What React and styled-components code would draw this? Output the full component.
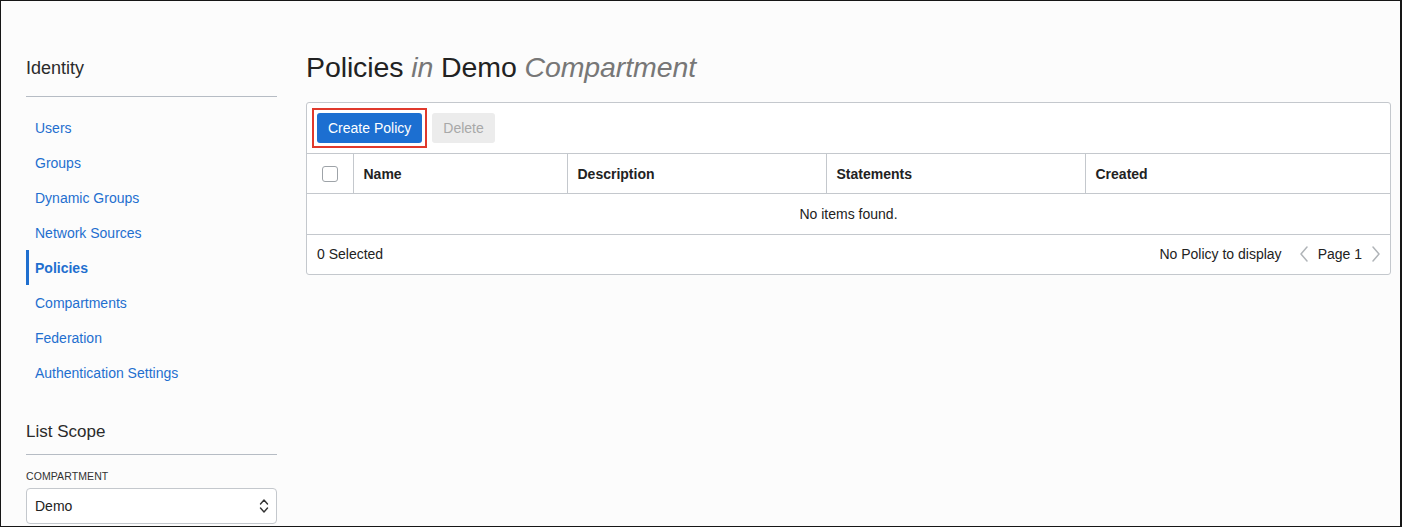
import React from "react";
import styled, { createGlobalStyle } from "styled-components";

const Global = createGlobalStyle`
  html, body { margin: 0; padding: 0; }
  body { font-family: "Liberation Sans", Arial, Helvetica, sans-serif; color: #222; }
  * { box-sizing: border-box; }
`;

const Frame = styled.div`
  width: 1402px;
  height: 527px;
  border: 1px solid #161616;
  border-right-width: 2px;
  background: #fcfcfc;
  display: flex;
  align-items: flex-start;
  padding: 0 10px 0 25px;
  gap: 29px;
  overflow: hidden;
`;

const Sidebar = styled.aside`
  width: 251px;
  flex: none;
  display: flex;
  flex-direction: column;
  padding-top: 55px;
`;

const SideTitle = styled.h2`
  margin: 0;
  font-size: ${(p) => p.$size || 18}px;
  line-height: 24px;
  font-weight: 300;
  color: #2b2b2b;
  padding-bottom: ${(p) => p.$pb || 16}px;
  border-bottom: 1px solid #b6bcc4;
`;

const NavList = styled.nav`
  display: flex;
  flex-direction: column;
  margin-top: 13px;
`;

const NavItem = styled.a`
  height: 35px;
  display: flex;
  align-items: center;
  padding-left: 6px;
  font-size: 14px;
  color: #1f6fcf;
  text-decoration: none;
  font-weight: ${(p) => (p.$active ? 700 : 400)};
  border-left: 3px solid ${(p) => (p.$active ? "#1f6fcf" : "transparent")};
`;

const ScopeSection = styled.div`
  margin-top: 30px;
  display: flex;
  flex-direction: column;
`;

const FieldLabel = styled.label`
  margin-top: 14px;
  font-size: 10.5px;
  line-height: 14px;
  font-weight: 500;
  letter-spacing: 0.1px;
  color: #333;
  text-transform: uppercase;
`;

const SelectBox = styled.div`
  margin-top: 5px;
  height: 36px;
  border: 1px solid #c4c8cd;
  border-radius: 4px;
  background: #fff;
  display: flex;
  align-items: center;
  justify-content: space-between;
  padding: 0 6px 0 8px;
  font-size: 14px;
  color: #222;
`;

const Main = styled.main`
  flex: 1;
  display: flex;
  flex-direction: column;
  padding-top: 50px;
`;

const Title = styled.h1`
  margin: 0;
  font-size: 28.5px;
  line-height: 32px;
  font-weight: 400;
  color: #222;
  letter-spacing: -0.1px;
`;

const Soft = styled.em`
  color: #777;
  font-style: italic;
`;

const Card = styled.section`
  margin-top: 19px;
  border: 1px solid #c4c8cd;
  border-radius: 3px;
  background: #fff;
  width: 1085px;
`;

const Toolbar = styled.div`
  display: flex;
  gap: 10px;
  padding: 10px;
`;

const Highlight = styled.span`
  display: inline-flex;
  margin: -5px;
  padding: 3px;
  border: 2px solid #e0392c;
`;

const Button = styled.button`
  height: 30px;
  padding: 0 11px;
  border: none;
  border-radius: 3px;
  font-family: inherit;
  font-size: 14px;
  background: ${(p) => (p.$primary ? "#1c6fd1" : "#ececec")};
  color: ${(p) => (p.$primary ? "#fff" : "#a8a8a8")};
`;

const Table = styled.table`
  width: 100%;
  border-collapse: collapse;
  table-layout: fixed;
  font-size: 14px;
`;

const Th = styled.th`
  height: 40px;
  border-top: 1px solid #c4c8cd;
  border-right: 1px solid #c4c8cd;
  text-align: left;
  padding: 0 10px;
  font-weight: 700;
  color: #222;
  &:last-child { border-right: none; }
`;

const CheckTh = styled(Th)`
  padding: 0 0 0 15px;
`;

const Checkbox = styled.span`
  display: block;
  width: 16px;
  height: 16px;
  border: 1px solid #9ea3a8;
  border-radius: 3px;
  background: #fff;
`;

const EmptyCell = styled.td`
  height: 40px;
  border-top: 1px solid #c4c8cd;
  text-align: center;
  color: #222;
`;

const Footer = styled.div`
  height: 40px;
  border-top: 1px solid #c4c8cd;
  display: flex;
  align-items: center;
  justify-content: space-between;
  padding: 0 8px 0 10px;
  font-size: 14px;
  color: #222;
`;

const Pager = styled.div`
  display: flex;
  align-items: center;
  gap: 8px;
`;

const PageInfo = styled.span`
  margin-right: 8px;
`;

const Chevron = ({ dir }) => (
  <svg width="12" height="18" viewBox="0 0 12 18" fill="none">
    <path
      d={dir === "left" ? "M9 2 L3 9 L9 16" : "M3 2 L9 9 L3 16"}
      stroke="#b0b4b8"
      strokeWidth="1.5"
      strokeLinecap="round"
      strokeLinejoin="round"
    />
  </svg>
);

const UpDown = () => (
  <svg width="12" height="18" viewBox="0 0 12 18" fill="none">
    <path d="M2.5 7 L6 3 L9.5 7" stroke="#333" strokeWidth="1.4" strokeLinecap="round" strokeLinejoin="round" />
    <path d="M2.5 11 L6 15 L9.5 11" stroke="#333" strokeWidth="1.4" strokeLinecap="round" strokeLinejoin="round" />
  </svg>
);

const nav = [
  "Users",
  "Groups",
  "Dynamic Groups",
  "Network Sources",
  "Policies",
  "Compartments",
  "Federation",
  "Authentication Settings",
];

const cols = [
  { label: "Name", w: 214 },
  { label: "Description", w: 259 },
  { label: "Statements", w: 259 },
  { label: "Created" },
];

export default function App() {
  return (
    <>
      <Global />
      <Frame>
        <Sidebar>
          <SideTitle>Identity</SideTitle>
          <NavList>
            {nav.map((n) => (
              <NavItem key={n} href="#" $active={n === "Policies"}>
                {n}
              </NavItem>
            ))}
          </NavList>
          <ScopeSection>
            <SideTitle $size={17} $pb={10}>List Scope</SideTitle>
            <FieldLabel>Compartment</FieldLabel>
            <SelectBox>
              <span>Demo</span>
              <UpDown />
            </SelectBox>
          </ScopeSection>
        </Sidebar>
        <Main>
          <Title>
            Policies <Soft>in</Soft> Demo <Soft>Compartment</Soft>
          </Title>
          <Card>
            <Toolbar>
              <Highlight>
                <Button $primary>Create Policy</Button>
              </Highlight>
              <Button disabled>Delete</Button>
            </Toolbar>
            <Table>
              <colgroup>
                <col style={{ width: 46 }} />
                {cols.map((c) => (
                  <col key={c.label} style={c.w ? { width: c.w } : undefined} />
                ))}
              </colgroup>
              <thead>
                <tr>
                  <CheckTh>
                    <Checkbox />
                  </CheckTh>
                  {cols.map((c) => (
                    <Th key={c.label}>{c.label}</Th>
                  ))}
                </tr>
              </thead>
              <tbody>
                <tr>
                  <EmptyCell colSpan={5}>No items found.</EmptyCell>
                </tr>
              </tbody>
            </Table>
            <Footer>
              <span>0 Selected</span>
              <Pager>
                <PageInfo>No Policy to display</PageInfo>
                <Chevron dir="left" />
                <span>Page 1</span>
                <Chevron dir="right" />
              </Pager>
            </Footer>
          </Card>
        </Main>
      </Frame>
    </>
  );
}
